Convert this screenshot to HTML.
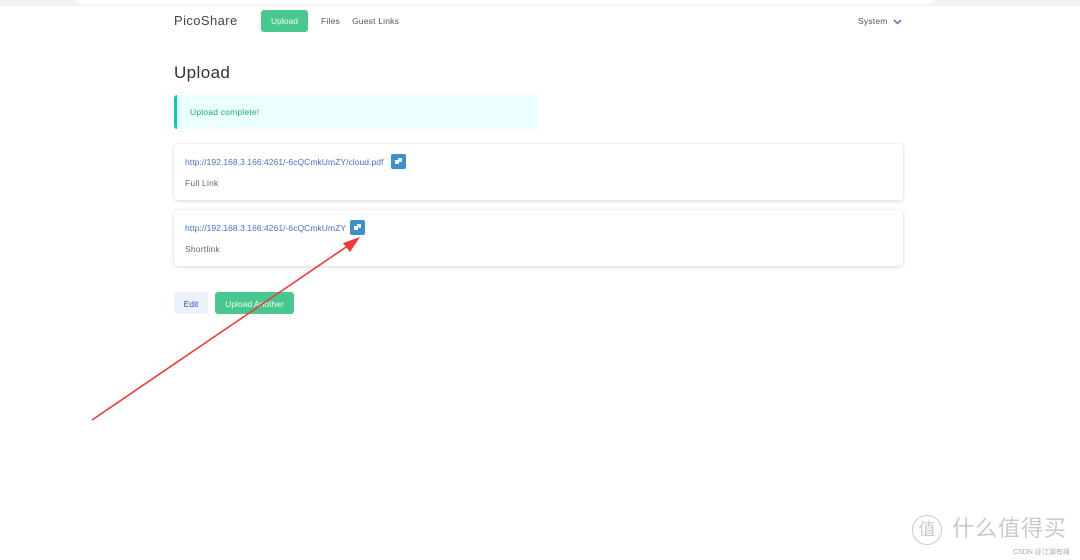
<!DOCTYPE html>
<html><head><meta charset="utf-8"><style>
*{margin:0;padding:0;box-sizing:border-box}
html,body{width:1080px;height:560px;overflow:hidden}
body{background:#fff;font-family:"Liberation Sans",sans-serif;position:relative;color:#4a4a4a}
.top{position:absolute;left:0;top:0;width:1080px;height:6px;background:#f3f3f4}
.top i{position:absolute;left:76px;top:0;width:858px;height:4px;background:#fff;border-radius:0 0 5px 5px}
.a{position:absolute;white-space:nowrap}
.brand{left:174px;top:13px;font-size:13px;color:#444;letter-spacing:.4px}
.nbtn{left:261px;top:10px;width:47px;height:22px;background:#48c78e;border-radius:3px;color:#e9fff4;font-size:8.5px;line-height:22px;text-align:center}
.nav{top:16px;font-size:8.5px;color:#555;letter-spacing:.2px}
h1{position:absolute;left:174px;top:63px;font-size:17px;font-weight:normal;color:#333;letter-spacing:.4px}
.note{left:174px;top:95px;width:364px;height:34px;background:#ebfffc;border-left:3px solid #00d1b2;border-radius:3px;font-size:8.5px;color:#1aa58d;padding:12px 0 0 13px;letter-spacing:.2px}
.card{left:174px;width:729px;height:56px;background:#fff;border-radius:4px;box-shadow:0 1px 4px rgba(0,0,0,.14),0 0 0 1px rgba(0,0,0,.02)}
.card .l{position:absolute;left:11px;top:13px;font-size:8.5px;color:#4a6fc9;letter-spacing:.05px;white-space:nowrap}
.card .s{position:absolute;left:11px;top:34px;font-size:8.5px;color:#666;letter-spacing:.2px}
.cp{position:absolute;width:15px;height:15px;background:#3e8ed0;border-radius:2px;top:10px}
.cp svg{position:absolute;left:4px;top:4px}
.b{top:292px;height:22px;border-radius:3px;font-size:8.5px;line-height:24px;text-align:center}
.wm{position:absolute;white-space:nowrap;color:#c9c9c9;font-family:"Liberation Sans","Noto Sans CJK SC",sans-serif}
</style></head><body>
<div class="top"><i></i></div>
<div class="a brand">PicoShare</div>
<div class="a nbtn">Upload</div>
<div class="a nav" style="left:321px">Files</div>
<div class="a nav" style="left:352px">Guest Links</div>
<div class="a nav" style="left:858px">System</div>
<svg class="a" style="left:893px;top:19px" width="9" height="6"><path d="M1 1l3.5 3.5L8 1" stroke="#4a6fc9" stroke-width="1.5" fill="none"/></svg>
<h1>Upload</h1>
<div class="a note">Upload complete!</div>
<div class="a card" style="top:144px"><div class="l">http://192.168.3.166:4261/-6cQCmkUmZY/cloud.pdf</div><div class="s">Full Link</div>
<div class="cp" style="left:217px"><svg width="7" height="7"><rect x="0" y="2" width="4" height="4" fill="#fff"/><rect x="3" y="0" width="4" height="4" fill="#fff" opacity=".85"/></svg></div></div>
<div class="a card" style="top:210px"><div class="l">http://192.168.3.166:4261/-6cQCmkUmZY</div><div class="s">Shortlink</div>
<div class="cp" style="left:176px"><svg width="7" height="7"><rect x="0" y="2" width="4" height="4" fill="#fff"/><rect x="3" y="0" width="4" height="4" fill="#fff" opacity=".85"/></svg></div></div>
<div class="a b" style="left:174px;width:34px;background:#eff1fa;color:#3850b7">Edit</div>
<div class="a b" style="left:215px;width:79px;background:#48c78e;color:#eafff3">Upload Another</div>
<svg class="a" style="left:0;top:0" width="1080" height="560"><line x1="92" y1="420" x2="352" y2="243" stroke="#f03a3a" stroke-width="1.6"/><path d="M360 237L343 243L350 252Z" fill="#f03a3a"/></svg>
<div class="wm" style="left:912px;top:515px;width:30px;height:30px;border:1.5px solid #ccc;border-radius:50%;font-size:17px;line-height:27px;text-align:center">值</div>
<div class="wm" style="left:952px;top:515px;font-size:22px;line-height:28px;letter-spacing:1px">什么值得买</div>
<div class="wm" style="left:1013px;top:547px;font-size:7px;color:#aaa">CSDN @江湖有缘</div>
</body></html>
